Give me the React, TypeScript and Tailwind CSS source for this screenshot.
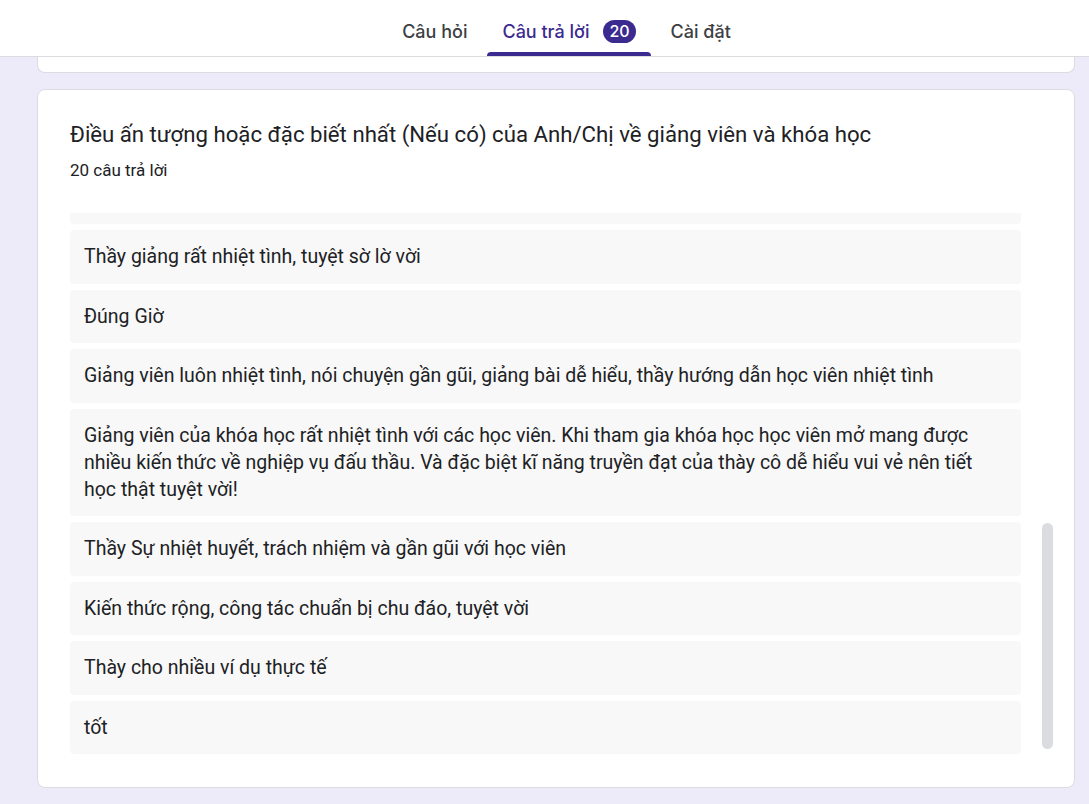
const answers = [
  "Thầy giảng rất nhiệt tình, tuyệt sờ lờ vời",
  "Đúng Giờ",
  "Giảng viên luôn nhiệt tình, nói chuyện gần gũi, giảng bài dễ hiểu, thầy hướng dẫn học viên nhiệt tình",
  "Giảng viên của khóa học rất nhiệt tình với các học viên. Khi tham gia khóa học học viên mở mang được nhiều kiến thức về nghiệp vụ đấu thầu. Và đặc biệt kĩ năng truyền đạt của thày cô dễ hiểu vui vẻ nên tiết học thật tuyệt vời!",
  "Thầy Sự nhiệt huyết, trách nhiệm và gần gũi với học viên",
  "Kiến thức rộng, công tác chuẩn bị chu đáo, tuyệt vời",
  "Thày cho nhiều ví dụ thực tế",
  "tốt",
];

function Tabs() {
  return (
    <header className="h-[57px] bg-white border-b border-[#dadce0] flex justify-center pl-[44px]">
      <nav className="flex items-stretch gap-[5px] text-[18px] font-medium" style={{ fontFamily: "Inter, Roboto, sans-serif" }}>
        <button className="px-[15px] text-[#3c4043] pt-[6px]">Câu hỏi</button>
        <button className="relative px-[15px] text-[#3b2a8f] flex items-center gap-[14px] pt-[6px]">
          Câu trả lời
          <span className="h-[23px] min-w-[30px] px-[6px] rounded-full bg-[#3b2a8f] text-white text-[16px] flex items-center justify-center">
            20
          </span>
          <span className="absolute left-0 right-0 bottom-0 h-[4px] rounded-t-[4px] bg-[#3b2a8f]" />
        </button>
        <button className="px-[15px] text-[#3c4043] pt-[6px]">Cài đặt</button>
      </nav>
    </header>
  );
}

export default function App() {
  return (
    <main className="min-h-[804px] bg-[#edeafa] pb-[18px]" style={{ fontFamily: "Roboto, sans-serif" }}>
      <Tabs />
      <div className="ml-[37px] mr-[14px]">
        {/* phần cuối của thẻ phía trên */}
        <div className="h-[16px] bg-white border border-t-0 border-[#dadce0] rounded-b-[8px]" />

        <section className="mt-[16px] bg-white border border-[#dadce0] rounded-[8px] pt-[28px] pb-[33px] pl-[32px] pr-[21px]">
          <h2 className="text-[22.2px] leading-[32px] text-[#202124]">
            Điều ấn tượng hoặc đặc biết nhất (Nếu có) của Anh/Chị về giảng viên và khóa học
          </h2>
          <p className="mt-[8px] text-[17px] leading-[24px] text-[#202124]">20 câu trả lời</p>

          <div className="mt-[31px] flex">
            <ul className="flex-1 flex flex-col gap-[6px] text-[19.5px] leading-[27px] text-[#202124]">
              <li className="h-[11px] bg-[#f8f8f8] rounded-b-[4px]" />
              {answers.map((a) => (
                <li key={a} className="bg-[#f8f8f8] rounded-[4px] px-[14px] py-[13.25px]">
                  {a}
                </li>
              ))}
            </ul>
            <div className="w-[11px] ml-[21px] flex flex-col">
              <div className="mt-[310px] h-[226px] rounded-full bg-[#dadce0]" />
            </div>
          </div>
        </section>
      </div>
    </main>
  );
}
